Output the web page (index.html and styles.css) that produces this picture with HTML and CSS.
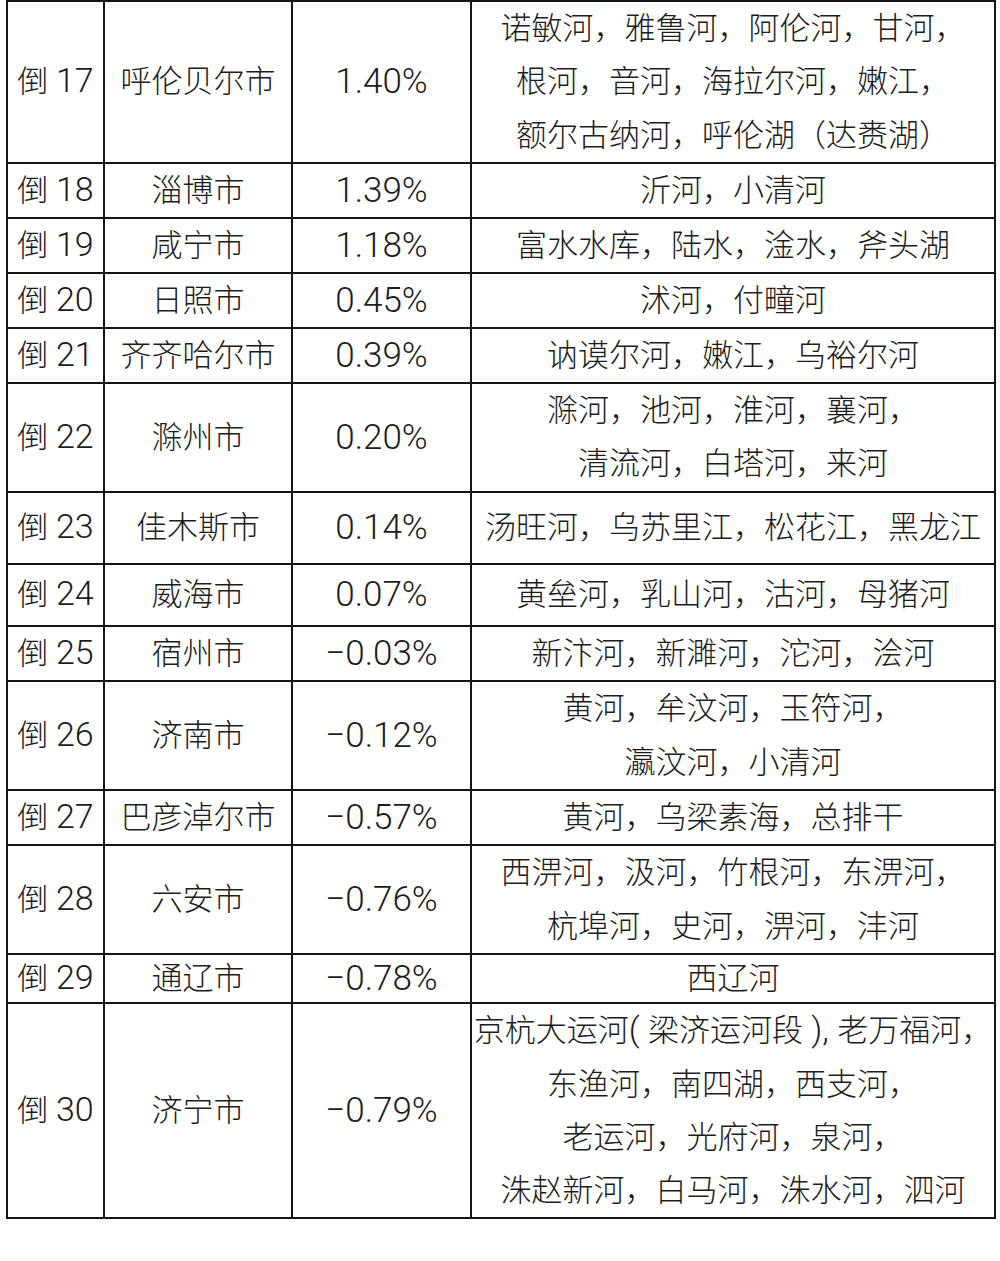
FILE: index.html
```html
<!DOCTYPE html>
<html lang="zh-CN">
<head>
<meta charset="utf-8">
<title>城市水质排名</title>
<link rel="stylesheet" href="styles.css">
</head>
<body>
<table class="rank">
  <colgroup>
    <col class="c-rank">
    <col class="c-city">
    <col class="c-pct">
    <col class="c-river">
  </colgroup>
  <tbody>
    <tr class="tri">
      <td>倒 <span class="n">17</span></td><td>呼伦贝尔市</td><td class="num">1.40%</td>
      <td>诺敏河，雅鲁河，阿伦河，甘河，<br>根河，音河，海拉尔河，嫩江，<br>额尔古纳河，呼伦湖（达赉湖）</td>
    </tr>
    <tr>
      <td>倒 <span class="n">18</span></td><td>淄博市</td><td class="num">1.39%</td>
      <td>沂河，小清河</td>
    </tr>
    <tr>
      <td>倒 <span class="n">19</span></td><td>咸宁市</td><td class="num">1.18%</td>
      <td>富水水库，陆水，淦水，斧头湖</td>
    </tr>
    <tr>
      <td>倒 <span class="n">20</span></td><td>日照市</td><td class="num">0.45%</td>
      <td>沭河，付疃河</td>
    </tr>
    <tr>
      <td>倒 <span class="n">21</span></td><td>齐齐哈尔市</td><td class="num">0.39%</td>
      <td>讷谟尔河，嫩江，乌裕尔河</td>
    </tr>
    <tr class="multi">
      <td>倒 <span class="n">22</span></td><td>滁州市</td><td class="num">0.20%</td>
      <td>滁河，池河，淮河，襄河，<br>清流河，白塔河，来河</td>
    </tr>
    <tr class="row-tall">
      <td>倒 <span class="n">23</span></td><td>佳木斯市</td><td class="num">0.14%</td>
      <td>汤旺河，乌苏里江，松花江，黑龙江</td>
    </tr>
    <tr class="row-mid">
      <td>倒 <span class="n">24</span></td><td>威海市</td><td class="num">0.07%</td>
      <td>黄垒河，乳山河，沽河，母猪河</td>
    </tr>
    <tr>
      <td>倒 <span class="n">25</span></td><td>宿州市</td><td class="num">−0.03%</td>
      <td>新汴河，新濉河，沱河，浍河</td>
    </tr>
    <tr class="multi">
      <td>倒 <span class="n">26</span></td><td>济南市</td><td class="num">−0.12%</td>
      <td>黄河，牟汶河，玉符河，<br>瀛汶河，小清河</td>
    </tr>
    <tr>
      <td>倒 <span class="n">27</span></td><td>巴彦淖尔市</td><td class="num">−0.57%</td>
      <td>黄河，乌梁素海，总排干</td>
    </tr>
    <tr class="multi">
      <td>倒 <span class="n">28</span></td><td>六安市</td><td class="num">−0.76%</td>
      <td>西淠河，汲河，竹根河，东淠河，<br>杭埠河，史河，淠河，沣河</td>
    </tr>
    <tr class="row-short">
      <td>倒 <span class="n">29</span></td><td>通辽市</td><td class="num">−0.78%</td>
      <td>西辽河</td>
    </tr>
    <tr class="quad">
      <td>倒 <span class="n">30</span></td><td>济宁市</td><td class="num">−0.79%</td>
      <td>京杭大运河<span class="lat">( </span>梁济运河段<span class="lat"> ), </span>老万福河，<br>东渔河，南四湖，西支河，<br>老运河，光府河，泉河，<br>洙赵新河，白马河，洙水河，泗河</td>
    </tr>
  </tbody>
</table>
</body>
</html>
```

FILE: styles.css
```css
html, body {
  margin: 0;
  padding: 0;
  background: #ffffff;
}

.rank {
  border-collapse: collapse;
  table-layout: fixed;
  width: 988px;
  margin: 0 0 0 6px;
  font-family: Roboto, "Noto Sans CJK SC", sans-serif;
  font-weight: 300;
  font-size: 31px;
  color: #1c1c1c;
}

.c-rank { width: 97px; }
.c-city { width: 188px; }
.c-pct { width: 179px; }
.c-river { width: 524px; }

.rank td {
  border: 2px solid #151515;
  padding: 0;
  text-align: center;
  vertical-align: middle;
  line-height: 53px;
  white-space: nowrap;
}

.rank .tri td {
  line-height: 53.25px;
}

.rank .multi td {
  line-height: 53.6px;
}

.rank .quad td {
  line-height: 53.25px;
}

.rank .n,
.rank .lat {
  font-size: 34px;
  line-height: 1;
}

.rank td.num {
  font-size: 35px;
}

.rank .row-tall td {
  height: 70px;
}

.rank .row-mid td {
  height: 60px;
}

.rank .row-short td {
  line-height: 47px;
}
```
